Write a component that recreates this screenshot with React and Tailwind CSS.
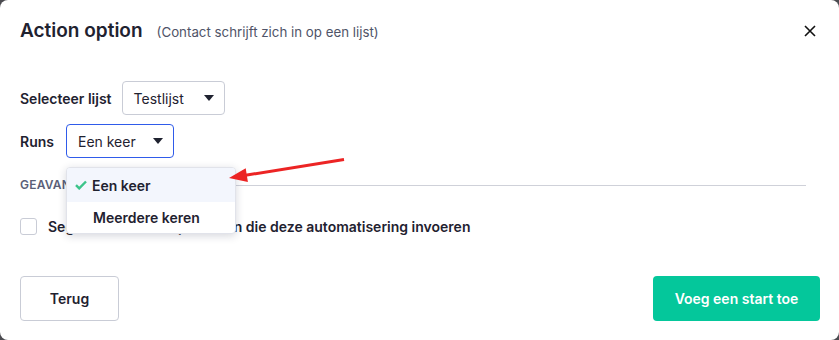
import React from 'react';

const font = { fontFamily: 'Inter, "Noto Sans", sans-serif' };

function Caret() {
  return (
    <svg width="10" height="6" viewBox="0 0 10 6" className="shrink-0">
      <path d="M0 0h10L5 6z" fill="#1f2230" />
    </svg>
  );
}

function Select({ value, active, width }) {
  return (
    <div
      className={`flex h-[34px] items-center justify-between rounded-[4px] border bg-white pl-[11px] pr-[10px] text-[14px] text-[#1f2230] ${width} ${
        active ? 'border-[#2f5bea]' : 'border-[#c9ccd6]'
      }`}
    >
      <span>{value}</span>
      <Caret />
    </div>
  );
}

export default function App() {
  return (
    <div className="h-[340px] w-[839px] bg-[#4b4b50]" style={font}>
      <div className="relative flex h-full flex-col rounded-[8px] bg-white text-[#1f2230]">
        {/* header */}
        <div className="flex items-center justify-between pl-5 pr-[23px] pt-[19px]">
          <div className="flex items-baseline">
            <h2 className="text-[19px] font-semibold leading-6">Action option</h2>
            <span className="ml-[14px] text-[13.3px] text-[#4f5468]">
              (Contact schrijft zich in op een lijst)
            </span>
          </div>
          <svg width="12" height="12" viewBox="0 0 12 12">
            <path d="M1 1l10 10M11 1L1 11" stroke="#111" strokeWidth="1.6" />
          </svg>
        </div>

        {/* body */}
        <div className="mt-[38px] flex flex-col px-5">
          <div className="flex items-center gap-[10px]">
            <span className="text-[14px] font-semibold">Selecteer lijst</span>
            <Select value="Testlijst" width="w-[103px]" />
          </div>
          <div className="mt-[9px] flex items-center gap-[12px]">
            <span className="text-[14px] font-semibold">Runs</span>
            <Select value="Een keer" active width="w-[108px]" />
          </div>

          <div className="mt-[18px] flex items-center gap-2 pr-[13px]">
            <span className="text-[12px] font-semibold tracking-[0.02em] text-[#5a6078]">
              GEAVANCEERD
            </span>
            <div className="h-px flex-1 bg-[#cfd1d9]" />
          </div>

          <label className="mt-[22px] flex items-center gap-[11px]">
            <span className="h-[17px] w-[17px] rounded-[3px] border border-[#c9ccd6] bg-white" />
            <span className="text-[14px] font-semibold">
              Segmenteer alleen personen die deze automatisering invoeren
            </span>
          </label>
        </div>

        {/* footer */}
        <div className="mt-auto flex items-center justify-between pb-[19px] pl-5 pr-[19px]">
          <button className="h-[45px] w-[99px] rounded-[4px] border border-[#c9ccd6] bg-white text-[14px] font-semibold">
            Terug
          </button>
          <button className="h-[45px] w-[167px] rounded-[4px] bg-[#04c79b] text-[14px] font-semibold text-white">
            Voeg een start toe
          </button>
        </div>

        {/* open dropdown menu */}
        <div className="absolute left-[66px] top-[167px] w-[170px] overflow-hidden rounded-[4px] border border-[#e1e3ea] bg-white shadow-[0_2px_8px_rgba(30,35,60,0.18)]">
          <div className="flex h-[34px] items-center bg-[#f3f6fd] pl-[8px] text-[14px] font-semibold">
            <svg width="12" height="10" viewBox="0 0 12 10" className="mr-[5px]">
              <path d="M1 5.2l3.2 3.2L11 1.5" fill="none" stroke="#3cc48a" strokeWidth="2.4" />
            </svg>
            Een keer
          </div>
          <div className="flex h-[31px] items-center pl-[26px] text-[14px] font-semibold">
            Meerdere keren
          </div>
        </div>

        {/* annotation arrow */}
        <svg className="pointer-events-none absolute left-0 top-0" width="839" height="340">
          <line x1="344" y1="159.5" x2="244" y2="175.5" stroke="#ec2424" strokeWidth="3" />
          <polygon points="229,178 245.7,168.3 247.9,182.1" fill="#ec2424" />
        </svg>
      </div>
    </div>
  );
}
